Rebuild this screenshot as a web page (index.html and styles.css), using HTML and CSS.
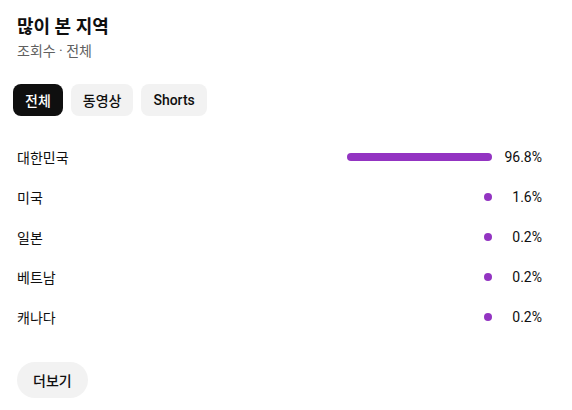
FILE: index.html
```html
<!DOCTYPE html>
<html lang="ko">
  <head>
    <meta charset="UTF-8" />
    <title>많이 본 지역</title>
    <link rel="stylesheet" href="styles.css">
  </head>
  <body>
    <div class="panel">
      <div class="header">
        <div class="title">많이 본 지역</div>
        <div class="subtitle">조회수 · 전체</div>
      </div>
      <div class="chips">
        <div class="chip active">전체</div>
        <div class="chip">동영상</div>
        <div class="chip">Shorts</div>
      </div>
      <div class="rows">
        <div class="row">
          <span class="label">대한민국</span>
          <div class="track"><div class="bar" style="width: 96.8%"></div></div>
          <span class="value">96.8%</span>
        </div>
        <div class="row">
          <span class="label">미국</span>
          <div class="track"><div class="bar" style="width: 1.6%"></div></div>
          <span class="value">1.6%</span>
        </div>
        <div class="row">
          <span class="label">일본</span>
          <div class="track"><div class="bar" style="width: 0.2%"></div></div>
          <span class="value">0.2%</span>
        </div>
        <div class="row">
          <span class="label">베트남</span>
          <div class="track"><div class="bar" style="width: 0.2%"></div></div>
          <span class="value">0.2%</span>
        </div>
        <div class="row">
          <span class="label">캐나다</span>
          <div class="track"><div class="bar" style="width: 0.2%"></div></div>
          <span class="value">0.2%</span>
        </div>
      </div>
      <div class="more">더보기</div>
    </div>
  </body>
</html>
```

FILE: styles.css
```css
html,
body {
  margin: 0;
  padding: 0;
  background: #ffffff;
  color: #0f0f0f;
  font-family: Roboto, "Noto Sans CJK KR", sans-serif;
}

.panel {
  padding: 15px 30px 0 17px;
}

.title {
  font-size: 18px;
  line-height: 24px;
  font-weight: 700;
}
.subtitle {
  margin-top: 2px;
  font-size: 14px;
  line-height: 20px;
  color: #606060;
}

.chips {
  display: flex;
  gap: 8px;
  margin: 23px 0 0 -4px;
}
.chip {
  height: 32px;
  padding: 0 12px;
  display: flex;
  align-items: center;
  border-radius: 8px;
  background: #f2f2f2;
  font-size: 14px;
  font-weight: 500;
}
.chip.active {
  background: #0f0f0f;
  color: #ffffff;
}

.rows {
  margin-top: 21px;
}
.row {
  display: flex;
  align-items: center;
  height: 40px;
  font-size: 14px;
}
.label {
  flex: 1;
}
.track {
  width: 150px;
  display: flex;
  justify-content: flex-end;
}
.bar {
  height: 8px;
  min-width: 8px;
  border-radius: 4px;
  background: #9334c2;
}
.value {
  width: 50px;
  text-align: right;
}

.more {
  display: inline-flex;
  align-items: center;
  height: 36px;
  margin-top: 25px;
  padding: 0 16px;
  border-radius: 18px;
  background: #f2f2f2;
  font-size: 14px;
  font-weight: 500;
}
```
